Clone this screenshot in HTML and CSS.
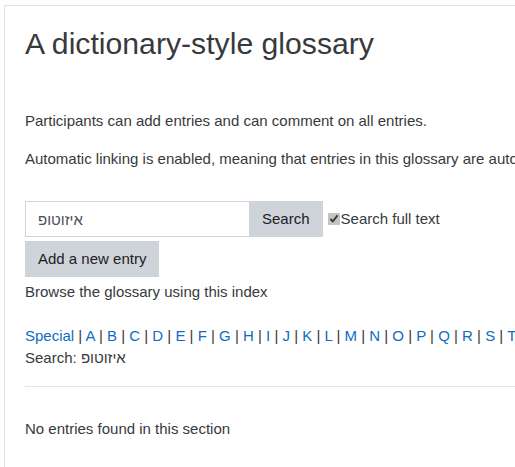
FILE: index.html
```html
<!DOCTYPE html>
<html lang="en">
<head>
<meta charset="utf-8">
<title>A dictionary-style glossary</title>
<link rel="stylesheet" href="styles.css">
</head>
<body>
<div class="page">
  <div class="card">
    <h2 class="title">A dictionary-style glossary</h2>
    <div class="intro">
      <p>Participants can add entries and can comment on all entries.</p>
      <p>Automatic linking is enabled, meaning that entries in this glossary are automatically linked wherever the concept words and phrases appear throughout the rest of the same course.</p>
    </div>
    <form class="search-form">
      <div class="input-group">
        <input class="search-input" type="text" value="איזוטופ" dir="auto">
        <button type="button" class="btn">Search</button>
      </div>
      <label class="fulltext"><input type="checkbox" checked>Search full text</label>
    </form>
    <div class="add-row"><button type="button" class="btn">Add a new entry</button></div>
    <p class="browse">Browse the glossary using this index</p>
    <div class="letters">
      <a href="#">Special</a> | <a href="#">A</a> | <a href="#">B</a> | <a href="#">C</a> | <a href="#">D</a> | <a href="#">E</a> | <a href="#">F</a> | <a href="#">G</a> | <a href="#">H</a> | <a href="#">I</a> | <a href="#">J</a> | <a href="#">K</a> | <a href="#">L</a> | <a href="#">M</a> | <a href="#">N</a> | <a href="#">O</a> | <a href="#">P</a> | <a href="#">Q</a> | <a href="#">R</a> | <a href="#">S</a> | <a href="#">T</a> | <a href="#">U</a> | <a href="#">V</a> | <a href="#">W</a> | <a href="#">X</a> | <a href="#">Y</a> | <a href="#">Z</a> | <a href="#">All</a>
    </div>
    <div class="search-term">Search: <span dir="rtl">איזוטופ</span></div>
    <hr class="sep">
    <p class="empty">No entries found in this section</p>
  </div>
</div>
</body>
</html>
```
FILE: styles.css
```css
html, body {
  margin: 0;
  padding: 0;
  overflow: hidden;
  background: #fff;
}
body {
  font-family: "Liberation Sans", Arial, "DejaVu Sans", sans-serif;
  font-size: 15px;
  line-height: 22.5px;
  color: #373a3c;
}
.page {
  padding: 5px 0 0 4px;
}
.card {
  width: 1000px;
  border: 1px solid #dee2e6;
  padding: 20px 20px 60px 20px;
  white-space: nowrap;
}
.title {
  margin: 0;
  font-size: 30.2px;
  line-height: 36px;
  font-weight: 400;
  color: #373a3c;
}
.intro {
  margin-top: 48px;
}
.intro p {
  margin: 0 0 15px 0;
}
.search-form {
  margin-top: 31px;
  display: flex;
  align-items: center;
}
.input-group {
  display: flex;
}
.search-input {
  box-sizing: border-box;
  width: 224px;
  height: 36px;
  padding: 6px 12px;
  border: 1px solid #ced4da;
  border-right: none;
  font-family: inherit;
  font-size: 15px;
  color: #495057;
  text-align: left;
  outline: none;
  margin: 0;
  border-radius: 0;
}
.btn {
  box-sizing: border-box;
  height: 36px;
  padding: 6px 12px;
  background: #ced4da;
  border: 1px solid #ced4da;
  border-radius: 0;
  font-family: inherit;
  font-size: 15px;
  line-height: 22.5px;
  color: #1d2125;
  margin: 0;
}
.fulltext {
  display: flex;
  align-items: center;
  margin-left: 5px;
}
.fulltext input {
  margin: 0 1px 0 0;
  width: 12px;
  height: 12px;
  accent-color: #c4c4c4;
}
.add-row {
  margin-top: 4px;
}
.browse {
  margin: 4px 0 0 0;
}
.letters {
  margin-top: 21px;
}
.letters a {
  color: #0f6cbf;
  text-decoration: none;
}
.sep {
  margin: 16px 0 0 0;
  border: 0;
  border-top: 1px solid #e6e6e6;
  height: 0;
}
.empty {
  margin: 31px 0 0 0;
}
```
